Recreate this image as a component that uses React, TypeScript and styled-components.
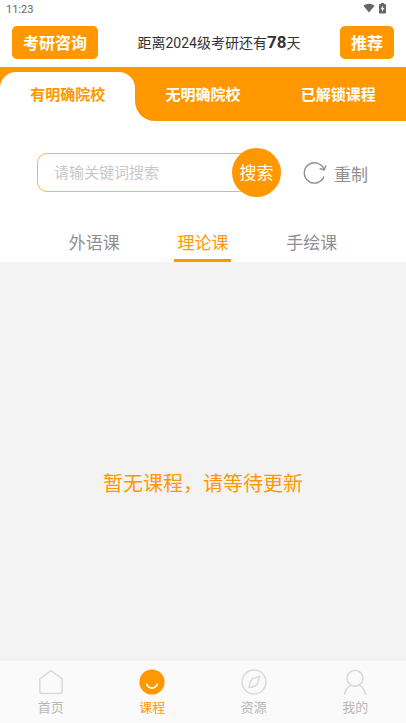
import React, { useState } from "react";
import styled, { createGlobalStyle } from "styled-components";

const ORANGE = "#ff9800";

const GlobalStyle = createGlobalStyle`
  * { box-sizing: border-box; }
  body {
    margin: 0;
    background: #fff;
    color: #333;
    font-family: Roboto, "Noto Sans CJK SC", sans-serif;
  }
  button, input { font-family: inherit; margin: 0; }
  button { border: 0; padding: 0; background: none; cursor: pointer; }
`;

const Page = styled.div`
  display: flex;
  flex-direction: column;
  min-height: 100vh;
`;

const StatusBar = styled.div`
  display: flex;
  align-items: center;
  justify-content: space-between;
  height: 18px;
  padding: 0 20px 0 6px;
  font-size: 11px;
  line-height: 18px;
  color: #666;

  span { padding-top: 2px; }
`;

const StatusIcons = styled.div`
  display: flex;
  align-items: center;
  gap: 4px;
  padding-bottom: 2px;
`;

const Header = styled.header`
  display: flex;
  align-items: center;
  justify-content: space-between;
  padding: 8px 12px;
`;

const HeaderButton = styled.button`
  height: 33px;
  padding: 3px 11px 0;
  border-radius: 5px;
  background: ${ORANGE};
  color: #fff;
  font-size: 16px;
  line-height: 30px;
  font-weight: 700;
`;

const Countdown = styled.p`
  margin: 0;
  padding-top: 1px;
  font-size: 14px;
  line-height: 24px;
  color: #333;
  white-space: nowrap;

  strong { font-size: 17px; line-height: 20px; }
`;

const SchoolTabs = styled.div`
  display: grid;
  grid-template-columns: repeat(3, 1fr);
  background: linear-gradient(to right, #fff 50%, ${ORANGE} 50%);
`;

const TabCell = styled.div<{ $afterActive: boolean }>`
  padding-top: 5px;
  background: ${ORANGE};
  border-bottom-left-radius: ${(p) => (p.$afterActive ? "20px" : "0")};
`;

const SchoolTab = styled.button<{ $active: boolean }>`
  display: block;
  width: 100%;
  height: 49px;
  padding-bottom: 6px;
  border-radius: 16px 16px 0 0;
  background: ${(p) => (p.$active ? "#fff" : "transparent")};
  color: ${(p) => (p.$active ? ORANGE : "#fff")};
  font-size: 15px;
  font-weight: 700;
`;

const SearchRow = styled.form`
  display: flex;
  align-items: center;
  padding: 27px 38px 0 37px;
`;

const SearchInput = styled.input`
  flex: 1;
  min-width: 0;
  height: 39px;
  margin-right: -24px;
  padding: 0 28px 0 16px;
  border: 1px solid #fbb54d;
  border-radius: 10px;
  background: #fff;
  color: #333;
  font-size: 15px;
  outline: none;

  &::placeholder { color: #c8c8c8; opacity: 1; }
`;

const SearchButton = styled.button`
  position: relative;
  flex: none;
  width: 49px;
  height: 49px;
  padding-bottom: 2px;
  border-radius: 50%;
  background: ${ORANGE};
  color: #fff;
  font-size: 17px;
`;

const ResetButton = styled.button`
  display: flex;
  align-items: center;
  gap: 7px;
  margin-left: 22px;
  color: #8f8f8f;
  font-size: 17px;
  line-height: 24px;

  span { padding-top: 4px; }
`;

const CourseTabs = styled.div`
  display: grid;
  grid-template-columns: repeat(3, 1fr);
  justify-items: center;
  padding: 29px 40px 0;
`;

const CourseTab = styled.button<{ $active: boolean }>`
  height: 36px;
  padding: 2px 3px 0;
  border-bottom: 3px solid ${(p) => (p.$active ? ORANGE : "transparent")};
  color: ${(p) => (p.$active ? ORANGE : "#8f8f8f")};
  font-size: 17px;
  line-height: 31px;
`;

const Content = styled.main`
  flex: 1;
  display: flex;
  align-items: center;
  justify-content: center;
  padding: 44px 20px 0;
  background: #f3f3f3;
`;

const EmptyText = styled.p`
  margin: 0;
  color: ${ORANGE};
  font-size: 20px;
  line-height: 30px;
`;

const BottomNav = styled.nav`
  display: grid;
  grid-template-columns: repeat(4, 1fr);
  padding: 8px 0 5px;
  background: #fafafa;
`;

const NavLink = styled.a<{ $active?: boolean }>`
  display: flex;
  flex-direction: column;
  align-items: center;
  gap: 3px;
  color: ${(p) => (p.$active ? ORANGE : "#b8b8b8")};
  font-size: 13px;
  line-height: 20px;
  text-decoration: none;

  svg { color: ${(p) => (p.$active ? ORANGE : "#dadada")}; }
`;

const WifiIcon = () => (
  <svg width="12" height="10" viewBox="0 0 12 10" aria-hidden="true">
    <path d="M6 9.6 0.4 2.8C3.6 0 8.4 0 11.6 2.8Z" fill="#666" />
  </svg>
);

const BatteryIcon = () => (
  <svg width="7" height="11" viewBox="0 0 7 11" aria-hidden="true">
    <path d="M2 0h3v1h1q1 0 1 1v7.5q0 1-1 1H1q-1 0-1-1V2q0-1 1-1h1Z" fill="#666" />
    <path d="M4 2.6 1.7 6.2h1.4v2.6l2.3-3.7H4Z" fill="#fff" />
  </svg>
);

const RefreshIcon = () => (
  <svg width="24" height="24" viewBox="0 0 24 24" fill="none" stroke="currentColor" strokeWidth="1.4" aria-hidden="true">
    <path d="M21 15.6A10.2 10.2 0 1 1 20.9 8" />
    <path d="M16.6 7.5 21.2 8.9 22.9 4.4" />
  </svg>
);

const HomeIcon = () => (
  <svg width="26" height="26" viewBox="0 0 26 26" fill="none" stroke="currentColor" strokeWidth="1.5" strokeLinejoin="round" aria-hidden="true">
    <path d="M1.8 9.8 13 1.6 24.2 9.8V22q0 2.6-2.6 2.6H4.4Q1.8 24.6 1.8 22Z" />
  </svg>
);

const CourseIcon = () => (
  <svg width="26" height="26" viewBox="0 0 26 26" fill="none" aria-hidden="true">
    <circle cx="13" cy="13" r="12.6" fill="currentColor" />
    <path d="M7.6 15.2C10 20.4 16 20.4 18.4 15.2" stroke="#fff" strokeWidth="1.6" strokeLinecap="round" />
  </svg>
);

const CompassIcon = () => (
  <svg width="26" height="26" viewBox="0 0 26 26" fill="none" stroke="currentColor" strokeWidth="1.5" strokeLinejoin="round" aria-hidden="true">
    <circle cx="13" cy="13" r="11.9" />
    <path d="M18.6 7.4 11.2 9.8Q8.4 13.4 8 18.4 12.8 18.6 16 15.4Z" />
  </svg>
);

const UserIcon = () => (
  <svg width="26" height="26" viewBox="0 0 26 26" fill="none" stroke="currentColor" strokeWidth="1.6" strokeLinecap="round" aria-hidden="true">
    <circle cx="13" cy="9.2" r="7.9" />
    <path d="M2.4 25.4Q3.6 19.4 8.6 16.4M17.4 16.4Q22.4 19.4 23.6 25.4" />
  </svg>
);

const schoolTabs = ["有明确院校", "无明确院校", "已解锁课程"];
const courseTabs = ["外语课", "理论课", "手绘课"];
const navItems = [
  { label: "首页", Icon: HomeIcon },
  { label: "课程", Icon: CourseIcon },
  { label: "资源", Icon: CompassIcon },
  { label: "我的", Icon: UserIcon },
];

export default function App() {
  const [school, setSchool] = useState(0);
  const [course, setCourse] = useState(1);
  const [keyword, setKeyword] = useState("");

  return (
    <Page>
      <GlobalStyle />
      <StatusBar>
        <span>11:23</span>
        <StatusIcons>
          <WifiIcon />
          <BatteryIcon />
        </StatusIcons>
      </StatusBar>
      <Header>
        <HeaderButton type="button">考研咨询</HeaderButton>
        <Countdown>
          距离2024级考研还有<strong>78</strong>天
        </Countdown>
        <HeaderButton type="button">推荐</HeaderButton>
      </Header>
      <SchoolTabs role="tablist">
        {schoolTabs.map((label, i) => (
          <TabCell key={label} $afterActive={i === school + 1}>
            <SchoolTab type="button" role="tab" aria-selected={i === school} $active={i === school} onClick={() => setSchool(i)}>
              {label}
            </SchoolTab>
          </TabCell>
        ))}
      </SchoolTabs>
      <SearchRow onSubmit={(e) => e.preventDefault()}>
        <SearchInput
          aria-label="请输关键词搜索"
          placeholder="请输关键词搜索"
          value={keyword}
          onChange={(e) => setKeyword(e.target.value)}
        />
        <SearchButton type="submit">搜索</SearchButton>
        <ResetButton type="button" onClick={() => setKeyword("")}>
          <RefreshIcon />
          <span>重制</span>
        </ResetButton>
      </SearchRow>
      <CourseTabs role="tablist">
        {courseTabs.map((label, i) => (
          <CourseTab key={label} type="button" role="tab" aria-selected={i === course} $active={i === course} onClick={() => setCourse(i)}>
            {label}
          </CourseTab>
        ))}
      </CourseTabs>
      <Content>
        <EmptyText>暂无课程，请等待更新</EmptyText>
      </Content>
      <BottomNav>
        {navItems.map(({ label, Icon }, i) => (
          <NavLink key={label} href="#" $active={i === 1}>
            <Icon />
            <span>{label}</span>
          </NavLink>
        ))}
      </BottomNav>
    </Page>
  );
}
